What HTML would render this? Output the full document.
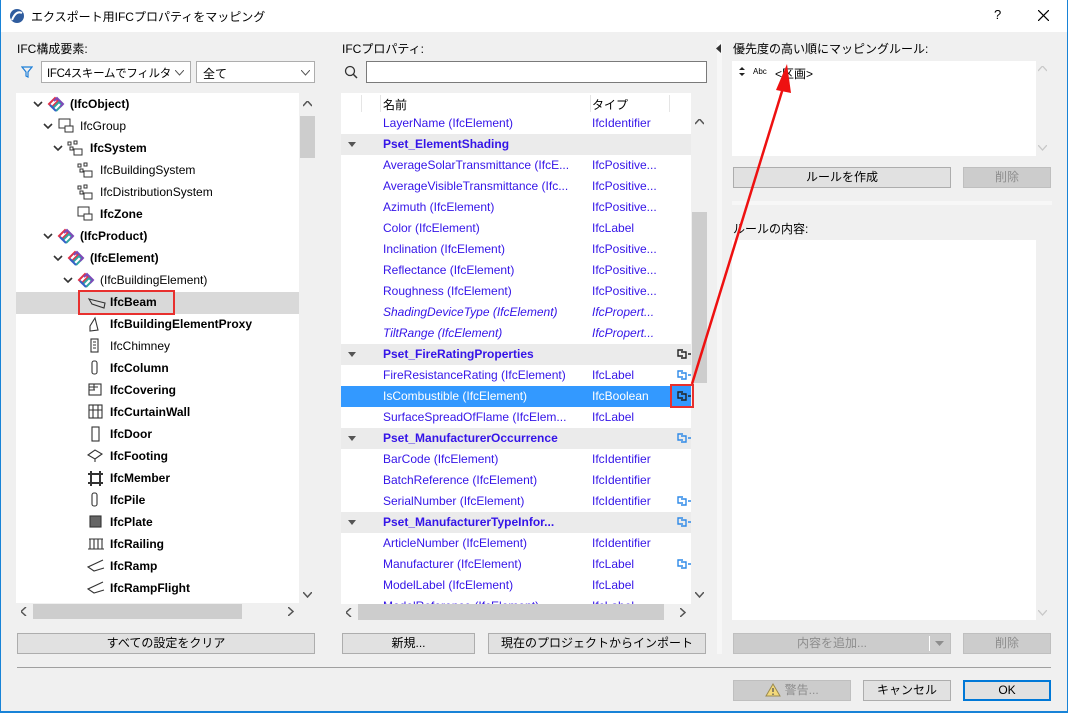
<!DOCTYPE html>
<html><head><meta charset="utf-8"><style>
*{box-sizing:border-box;margin:0;padding:0}
body{width:1068px;height:713px;overflow:hidden;background:#f0f0f0;font-family:"Liberation Sans","Noto Sans CJK JP",sans-serif;font-size:12px;color:#000;position:relative}
.a{position:absolute;white-space:nowrap}
.btn{position:absolute;background:#e1e1e1;border:1px solid #adadad;text-align:center;line-height:19px;font-size:12px}
.dis{background:#cccccc;border-color:#bfbfbf;color:#8d8d8d}
.w{position:absolute;background:#fff}
.b{font-weight:bold}
.p{position:absolute;left:0;width:350px;height:21px;line-height:21px;color:#3414e8;white-space:nowrap}
.p .n{position:absolute;left:42px}
.p .t{position:absolute;left:251px}
.g{background:#ebebeb;font-weight:bold}
.g:before{content:"";position:absolute;left:7px;top:8px;border:4px solid transparent;border-top:5px solid #555;border-bottom:0}
.sel{background:#3399ff;color:#fff}
.i{font-style:italic}
.lk{position:absolute;left:336px;top:5px}
</style></head><body>
<div class="a" style="left:0;top:0;width:1068px;height:32px;background:#fff"></div>
<div class="a" style="left:0;top:0;width:1px;height:713px;background:#1883d7"></div>
<div class="a" style="left:1067px;top:0;width:1px;height:713px;background:#1883d7"></div>
<div class="a" style="left:0;top:711px;width:1068px;height:2px;background:#1883d7"></div>
<svg class="a" style="left:9px;top:8px" width="16" height="16"><circle cx="8" cy="8" r="7" fill="#2f5c9e"/><path d="M3 12 Q7 2 13 5" stroke="#fff" stroke-width="2" fill="none"/></svg>
<div class="a" style="left:31px;top:8px;font-size:12px">エクスポート用IFCプロパティをマッピング</div>
<div class="a" style="left:994px;top:7px;font-size:13px">?</div>
<svg class="a" style="left:1038px;top:10px" width="11" height="11"><path d="M0 0L11 11M11 0L0 11" stroke="#000" stroke-width="1.2"/></svg>

<div class="a" style="left:17px;top:40px">IFC構成要素:</div>
<svg class="a" style="left:21px;top:66px" width="12" height="12"><path d="M1 1H11L7 6V11L5 10V6Z" fill="none" stroke="#1e7fd8" stroke-width="1.2"/></svg>
<div class="w" style="left:41px;top:61px;width:150px;height:22px;border:1px solid #adadad"><span class="a" style="left:5px;top:3px;font-size:11.5px;letter-spacing:-0.3px">IFC4スキームでフィルタ</span><svg class="a" style="left:133px;top:8px" width="9" height="6"><path d="M0 0L4.5 5L9 0" fill="none" stroke="#555"/></svg></div>
<div class="w" style="left:196px;top:61px;width:119px;height:22px;border:1px solid #adadad"><span class="a" style="left:6px;top:3px">全て</span><svg class="a" style="left:104px;top:8px" width="9" height="6"><path d="M0 0L4.5 5L9 0" fill="none" stroke="#555"/></svg></div>

<div class="w" style="left:16px;top:93px;width:283px;height:510px"></div>
<div class="a" style="left:16px;top:292px;width:283px;height:22px;background:#d9d9d9"></div>
<div class="a" style="left:78px;top:290px;width:97px;height:25px;border:2px solid #e8302e"></div>
<div class="a" style="left:299px;top:93px;width:16px;height:510px;background:#f0f0f0"></div>
<div class="a" style="left:300px;top:116px;width:15px;height:42px;background:#cdcdcd"></div>
<svg class="a" style="left:303px;top:101px" width="9" height="6"><path d="M0 5L4.5 0L9 5" fill="none" stroke="#555" stroke-width="1.5"/></svg>
<svg class="a" style="left:303px;top:592px" width="9" height="6"><path d="M0 0L4.5 5L9 0" fill="none" stroke="#555" stroke-width="1.5"/></svg>
<div class="a" style="left:33px;top:604px;width:209px;height:15px;background:#cdcdcd"></div>
<svg class="a" style="left:21px;top:607px" width="6" height="9"><path d="M5 0L0 4.5L5 9" fill="none" stroke="#555" stroke-width="1.5"/></svg>
<svg class="a" style="left:288px;top:607px" width="6" height="9"><path d="M0 0L5 4.5L0 9" fill="none" stroke="#555" stroke-width="1.5"/></svg>

<svg class="a" style="left:0;top:0" width="320" height="600">
<defs>
<g id="chev"><path d="M0 0L4 4L8 0" fill="none" stroke="#333" stroke-width="1.6"/></g>
<g id="ifc"><path d="M1 8L7 2L10 5L4 11Z" fill="none" stroke="#e0334a" stroke-width="2"/><path d="M8 15L14 9L11 6L5 12" fill="none" stroke="#2fa6a0" stroke-width="2"/><path d="M6 5L9 2L15 8L12 11" fill="none" stroke="#7c4ab8" stroke-width="2"/><path d="M2 9L8 15" fill="none" stroke="#3260c8" stroke-width="2"/></g>
<g id="grp"><rect x="1" y="1" width="11" height="9" fill="none" stroke="#333"/><rect x="7" y="8" width="8" height="6" fill="#fff" stroke="#333"/></g>
<g id="sys"><rect x="1" y="2" width="3" height="3" fill="none" stroke="#333"/><rect x="7" y="1" width="3" height="3" fill="none" stroke="#333"/><rect x="3" y="7" width="3" height="3" fill="none" stroke="#333"/><rect x="7" y="9" width="8" height="6" fill="#fff" stroke="#333"/></g>
</defs>
<use href="#chev" x="34" y="102"/><use href="#ifc" x="48" y="96"/>
<use href="#chev" x="44" y="124"/><use href="#grp" x="58" y="118"/>
<use href="#chev" x="54" y="146"/><use href="#sys" x="67" y="140"/>
<use href="#sys" x="77" y="162"/><use href="#sys" x="77" y="184"/><use href="#grp" x="77" y="206"/>
<use href="#chev" x="44" y="234"/><use href="#ifc" x="58" y="228"/>
<use href="#chev" x="54" y="256"/><use href="#ifc" x="68" y="250"/>
<use href="#chev" x="64" y="278"/><use href="#ifc" x="78" y="272"/>
<g fill="none" stroke="#333" stroke-width="1.1">
<path d="M89 299L105 303L104 308L92 304Z"/>
<path d="M90 326L95 318L98 330L90 331Z"/>
<rect x="91" y="339" width="7" height="13"/><path d="M93 342H96M93 345H96M93 348H96"/>
<rect x="92" y="361" width="5" height="13" rx="2"/>
<rect x="89" y="384" width="12" height="11"/><path d="M89 387H98M89 390H95M94 384V390"/>
<rect x="89" y="405" width="13" height="13"/><path d="M93 405V418M98 405V418M89 410H102"/>
<rect x="92" y="427" width="7" height="14"/>
<path d="M88 455L95 450L102 454L95 459Z M95 459V462"/>
<path d="M91 471V486M100 471V486M88 474H103M88 483H103" stroke-width="2"/>
<rect x="92" y="493" width="5" height="13" rx="2"/>
<rect x="90" y="516" width="11" height="11" fill="#666"/>
<path d="M89 539H103M90 539V549M94 539V549M98 539V549M102 539V549M88 549H104"/>
<path d="M103 560L88 567L94 571L104 568"/>
<path d="M103 582L88 589L94 593L104 590"/>
</g>
</svg>
<div class="a b" style="left:70px;top:97px">(IfcObject)</div>
<div class="a" style="left:80px;top:119px">IfcGroup</div>
<div class="a b" style="left:90px;top:141px">IfcSystem</div>
<div class="a" style="left:100px;top:163px">IfcBuildingSystem</div>
<div class="a" style="left:100px;top:185px">IfcDistributionSystem</div>
<div class="a b" style="left:100px;top:207px">IfcZone</div>
<div class="a b" style="left:80px;top:229px">(IfcProduct)</div>
<div class="a b" style="left:90px;top:251px">(IfcElement)</div>
<div class="a" style="left:100px;top:273px">(IfcBuildingElement)</div>
<div class="a b" style="left:110px;top:295px">IfcBeam</div>
<div class="a b" style="left:110px;top:317px">IfcBuildingElementProxy</div>
<div class="a" style="left:110px;top:339px">IfcChimney</div>
<div class="a b" style="left:110px;top:361px">IfcColumn</div>
<div class="a b" style="left:110px;top:383px">IfcCovering</div>
<div class="a b" style="left:110px;top:405px">IfcCurtainWall</div>
<div class="a b" style="left:110px;top:427px">IfcDoor</div>
<div class="a b" style="left:110px;top:449px">IfcFooting</div>
<div class="a b" style="left:110px;top:471px">IfcMember</div>
<div class="a b" style="left:110px;top:493px">IfcPile</div>
<div class="a b" style="left:110px;top:515px">IfcPlate</div>
<div class="a b" style="left:110px;top:537px">IfcRailing</div>
<div class="a b" style="left:110px;top:559px">IfcRamp</div>
<div class="a b" style="left:110px;top:581px">IfcRampFlight</div>
<div class="btn" style="left:17px;top:633px;width:298px;height:21px">すべての設定をクリア</div>

<div class="a" style="left:342px;top:40px">IFCプロパティ:</div>
<svg class="a" style="left:344px;top:65px" width="14" height="14"><circle cx="6" cy="6" r="4.5" fill="none" stroke="#333" stroke-width="1.3"/><path d="M9 9L13 13" stroke="#333" stroke-width="1.5"/></svg>
<div class="w" style="left:366px;top:61px;width:341px;height:22px;border:1px solid #7a7a7a"></div>
<div class="w" style="left:341px;top:93px;width:350px;height:511px;overflow:hidden">
<div class="a" style="left:20px;top:2px;width:1px;height:17px;background:#e5e5e5"></div>
<div class="a" style="left:39px;top:2px;width:1px;height:17px;background:#e5e5e5"></div>
<div class="a" style="left:249px;top:2px;width:1px;height:17px;background:#e5e5e5"></div>
<div class="a" style="left:328px;top:2px;width:1px;height:17px;background:#e5e5e5"></div>
<div class="a" style="left:42px;top:3px">名前</div>
<div class="a" style="left:251px;top:3px">タイプ</div>
<div style="position:absolute;left:0;top:20px;width:350px">
<div class="p" style="top:0"><span class="n">LayerName (IfcElement)</span><span class="t">IfcIdentifier</span></div>
<div class="p g" style="top:21px"><span class="n">Pset_ElementShading</span></div>
<div class="p" style="top:42px"><span class="n">AverageSolarTransmittance (IfcE...</span><span class="t">IfcPositive...</span></div>
<div class="p" style="top:63px"><span class="n">AverageVisibleTransmittance (Ifc...</span><span class="t">IfcPositive...</span></div>
<div class="p" style="top:84px"><span class="n">Azimuth (IfcElement)</span><span class="t">IfcPositive...</span></div>
<div class="p" style="top:105px"><span class="n">Color (IfcElement)</span><span class="t">IfcLabel</span></div>
<div class="p" style="top:126px"><span class="n">Inclination (IfcElement)</span><span class="t">IfcPositive...</span></div>
<div class="p" style="top:147px"><span class="n">Reflectance (IfcElement)</span><span class="t">IfcPositive...</span></div>
<div class="p" style="top:168px"><span class="n">Roughness (IfcElement)</span><span class="t">IfcPositive...</span></div>
<div class="p i" style="top:189px"><span class="n">ShadingDeviceType (IfcElement)</span><span class="t">IfcPropert...</span></div>
<div class="p i" style="top:210px"><span class="n">TiltRange (IfcElement)</span><span class="t">IfcPropert...</span></div>
<div class="p g" style="top:231px"><span class="n">Pset_FireRatingProperties</span><svg class="lk" width="14" height="10"><path d="M6 1H1V7H6M4 3H9V9H4M11 5H14" fill="none" stroke="#222" stroke-width="1.4"/></svg></div>
<div class="p" style="top:252px"><span class="n">FireResistanceRating (IfcElement)</span><span class="t">IfcLabel</span><svg class="lk" width="14" height="10"><path d="M6 1H1V7H6M4 3H9V9H4M11 5H14" fill="none" stroke="#2f8ae8" stroke-width="1.4"/></svg></div>
<div class="p sel" style="top:273px"><span class="n">IsCombustible (IfcElement)</span><span class="t">IfcBoolean</span><svg class="lk" width="14" height="10"><path d="M6 1H1V7H6M4 3H9V9H4M11 5H14" fill="none" stroke="#222" stroke-width="1.4"/></svg></div>
<div class="p" style="top:294px"><span class="n">SurfaceSpreadOfFlame (IfcElem...</span><span class="t">IfcLabel</span></div>
<div class="p g" style="top:315px"><span class="n">Pset_ManufacturerOccurrence</span><svg class="lk" width="14" height="10"><path d="M6 1H1V7H6M4 3H9V9H4M11 5H14" fill="none" stroke="#2f8ae8" stroke-width="1.4"/></svg></div>
<div class="p" style="top:336px"><span class="n">BarCode (IfcElement)</span><span class="t">IfcIdentifier</span></div>
<div class="p" style="top:357px"><span class="n">BatchReference (IfcElement)</span><span class="t">IfcIdentifier</span></div>
<div class="p" style="top:378px"><span class="n">SerialNumber (IfcElement)</span><span class="t">IfcIdentifier</span><svg class="lk" width="14" height="10"><path d="M6 1H1V7H6M4 3H9V9H4M11 5H14" fill="none" stroke="#2f8ae8" stroke-width="1.4"/></svg></div>
<div class="p g" style="top:399px"><span class="n">Pset_ManufacturerTypeInfor...</span><svg class="lk" width="14" height="10"><path d="M6 1H1V7H6M4 3H9V9H4M11 5H14" fill="none" stroke="#2f8ae8" stroke-width="1.4"/></svg></div>
<div class="p" style="top:420px"><span class="n">ArticleNumber (IfcElement)</span><span class="t">IfcIdentifier</span></div>
<div class="p" style="top:441px"><span class="n">Manufacturer (IfcElement)</span><span class="t">IfcLabel</span><svg class="lk" width="14" height="10"><path d="M6 1H1V7H6M4 3H9V9H4M11 5H14" fill="none" stroke="#2f8ae8" stroke-width="1.4"/></svg></div>
<div class="p" style="top:462px"><span class="n">ModelLabel (IfcElement)</span><span class="t">IfcLabel</span></div>
<div class="p" style="top:483px"><span class="n">ModelReference (IfcElement)</span><span class="t">IfcLabel</span></div>
</div>
</div>
<div class="a" style="left:691px;top:112px;width:16px;height:492px;background:#f0f0f0"></div>
<div class="a" style="left:692px;top:212px;width:15px;height:171px;background:#cdcdcd"></div>
<svg class="a" style="left:695px;top:119px" width="9" height="6"><path d="M0 5L4.5 0L9 5" fill="none" stroke="#555" stroke-width="1.5"/></svg>
<svg class="a" style="left:695px;top:592px" width="9" height="6"><path d="M0 0L4.5 5L9 0" fill="none" stroke="#555" stroke-width="1.5"/></svg>
<div class="a" style="left:341px;top:604px;width:366px;height:16px;background:#f0f0f0"></div>
<div class="a" style="left:358px;top:604px;width:306px;height:16px;background:#cdcdcd"></div>
<svg class="a" style="left:346px;top:608px" width="6" height="9"><path d="M5 0L0 4.5L5 9" fill="none" stroke="#555" stroke-width="1.5"/></svg>
<svg class="a" style="left:680px;top:608px" width="6" height="9"><path d="M0 0L5 4.5L0 9" fill="none" stroke="#555" stroke-width="1.5"/></svg>
<div class="btn" style="left:342px;top:633px;width:133px;height:21px">新規...</div>
<div class="btn" style="left:488px;top:633px;width:218px;height:21px">現在のプロジェクトからインポート</div>

<div class="a" style="left:717px;top:40px;width:5px;height:614px;background:#f7f7f7"></div>
<svg class="a" style="left:716px;top:44px" width="5" height="9"><path d="M5 0L0 4.5L5 9Z" fill="#333"/></svg>

<div class="a" style="left:733px;top:40px">優先度の高い順にマッピングルール:</div>
<div class="w" style="left:732px;top:61px;width:304px;height:95px"></div>
<svg class="a" style="left:739px;top:67px" width="6" height="9"><path d="M0 3L3 0L6 3ZM0 6L3 9L6 6Z" fill="#222"/></svg>
<div class="a" style="left:753px;top:67px;font-size:8px">Abc</div>
<div class="a" style="left:775px;top:65px">&lt;区画&gt;</div>
<svg class="a" style="left:1038px;top:66px" width="9" height="6"><path d="M0 5L4.5 0L9 5" fill="none" stroke="#c8c8c8" stroke-width="1.3"/></svg>
<svg class="a" style="left:1038px;top:145px" width="9" height="6"><path d="M0 0L4.5 5L9 0" fill="none" stroke="#c8c8c8" stroke-width="1.3"/></svg>
<div class="btn" style="left:733px;top:167px;width:218px;height:21px">ルールを作成</div>
<div class="btn dis" style="left:963px;top:167px;width:88px;height:21px">削除</div>
<div class="a" style="left:732px;top:201px;width:320px;height:4px;background:#f7f7f7"></div>
<div class="a" style="left:733px;top:220px">ルールの内容:</div>
<div class="w" style="left:732px;top:240px;width:304px;height:380px"></div>
<svg class="a" style="left:1038px;top:610px" width="9" height="6"><path d="M0 0L4.5 5L9 0" fill="none" stroke="#c8c8c8" stroke-width="1.3"/></svg>
<div class="btn dis" style="left:733px;top:633px;width:218px;height:21px"><span style="margin-right:20px">内容を追加...</span></div>
<div class="a" style="left:929px;top:636px;width:1px;height:15px;background:#fff"></div>
<svg class="a" style="left:935px;top:641px" width="9" height="5"><path d="M0 0H9L4.5 5Z" fill="#8d8d8d"/></svg>
<div class="btn dis" style="left:963px;top:633px;width:88px;height:21px">削除</div>

<div class="a" style="left:17px;top:667px;width:1034px;height:1px;background:#a0a0a0"></div>
<div class="btn dis" style="left:733px;top:680px;width:118px;height:21px"><svg style="vertical-align:-3px" width="16" height="14"><path d="M8 1L15 13H1Z" fill="#f3d97a" stroke="#9a8a50"/><path d="M8 5V9M8 10.5V12" stroke="#555" stroke-width="1.3"/></svg> 警告...</div>
<div class="btn" style="left:863px;top:680px;width:88px;height:21px">キャンセル</div>
<div class="btn" style="left:963px;top:680px;width:88px;height:21px;border:2px solid #0078d7;line-height:17px">OK</div>

<div class="a" style="left:670px;top:384px;width:24px;height:24px;border:2px solid #e8302e"></div>
<svg class="a" style="left:0;top:0" width="1068" height="713"><path d="M692 384L783 88" stroke="#ee1111" stroke-width="2.5"/><path d="M787 64L776 90L791 93Z" fill="#ee1111"/></svg>
</body></html>
